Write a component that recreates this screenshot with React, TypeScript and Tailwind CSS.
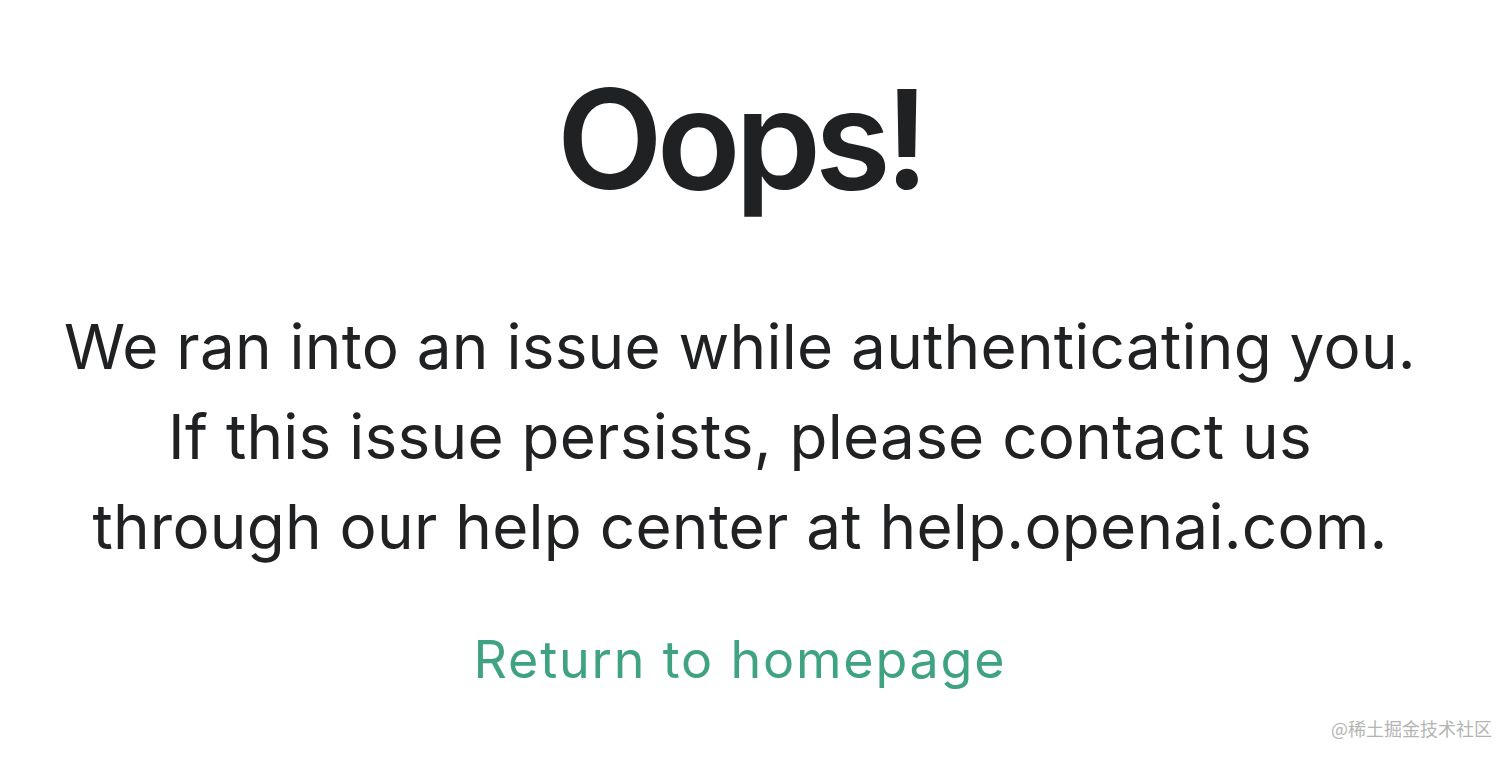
import React from 'react';

export default function App() {
  return (
    <div className="relative h-[759px] w-full bg-white overflow-hidden font-['Inter','Noto_Sans',sans-serif] text-[#202123]">
      <div className="flex flex-col items-center pt-[69px] pr-[32px]">
        <h1 className="text-[138px] leading-[140px] font-semibold tracking-[-6px]">Oops!</h1>
        <p className="mt-[93px] text-center text-[62px] leading-[90px] font-normal tracking-[0.25px]">
          We ran into an issue while authenticating you.
          <br />
          If this issue persists, please contact us
          <br />
          through our help center at help.openai.com.
        </p>
        <a href="#" className="mt-[58px] text-[52px] leading-[60px] text-[#3ea283] tracking-[1.8px]">
          Return to homepage
        </a>
      </div>
      <div className="absolute right-[20px] bottom-[20px] text-[18px] leading-[22px] text-[#b4b4b4] font-['Noto_Sans_CJK_SC',sans-serif]">
        @稀土掘金技术社区
      </div>
    </div>
  );
}
